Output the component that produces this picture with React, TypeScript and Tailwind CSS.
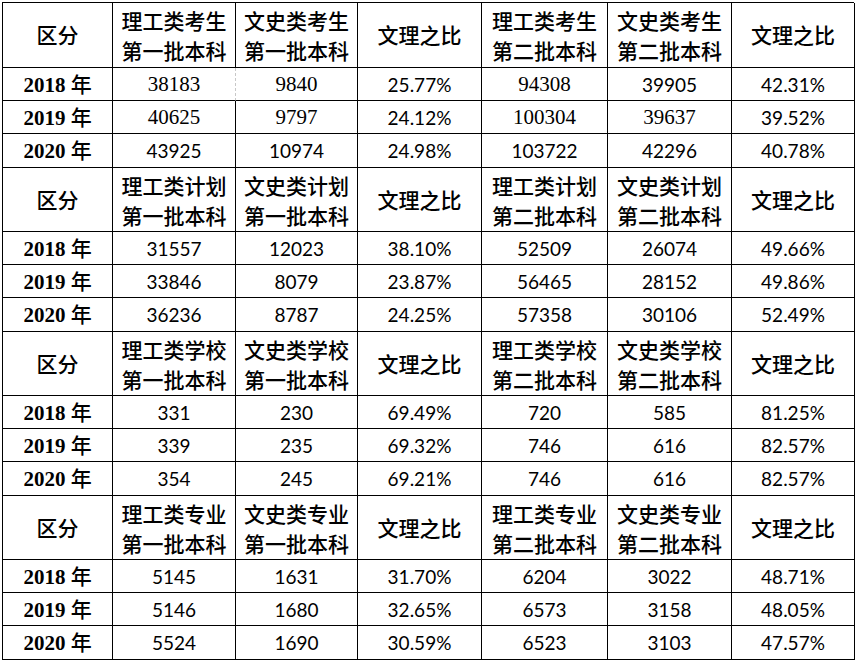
import React from "react";

type Cell = { v: string; serif?: boolean };

const sections: { h: string; rows: Cell[][] }[] = [
  {
    h: "考生",
    rows: [
      [{ v: "38183", serif: true }, { v: "9840", serif: true }, { v: "25.77%" }, { v: "94308", serif: true }, { v: "39905" }, { v: "42.31%" }],
      [{ v: "40625", serif: true }, { v: "9797", serif: true }, { v: "24.12%" }, { v: "100304", serif: true }, { v: "39637", serif: true }, { v: "39.52%" }],
      [{ v: "43925" }, { v: "10974" }, { v: "24.98%" }, { v: "103722" }, { v: "42296" }, { v: "40.78%" }],
    ],
  },
  {
    h: "计划",
    rows: [
      [{ v: "31557" }, { v: "12023" }, { v: "38.10%" }, { v: "52509" }, { v: "26074" }, { v: "49.66%" }],
      [{ v: "33846" }, { v: "8079" }, { v: "23.87%" }, { v: "56465" }, { v: "28152" }, { v: "49.86%" }],
      [{ v: "36236" }, { v: "8787" }, { v: "24.25%" }, { v: "57358" }, { v: "30106" }, { v: "52.49%" }],
    ],
  },
  {
    h: "学校",
    rows: [
      [{ v: "331" }, { v: "230" }, { v: "69.49%" }, { v: "720" }, { v: "585" }, { v: "81.25%" }],
      [{ v: "339" }, { v: "235" }, { v: "69.32%" }, { v: "746" }, { v: "616" }, { v: "82.57%" }],
      [{ v: "354" }, { v: "245" }, { v: "69.21%" }, { v: "746" }, { v: "616" }, { v: "82.57%" }],
    ],
  },
  {
    h: "专业",
    rows: [
      [{ v: "5145" }, { v: "1631" }, { v: "31.70%" }, { v: "6204" }, { v: "3022" }, { v: "48.71%" }],
      [{ v: "5146" }, { v: "1680" }, { v: "32.65%" }, { v: "6573" }, { v: "3158" }, { v: "48.05%" }],
      [{ v: "5524" }, { v: "1690" }, { v: "30.59%" }, { v: "6523" }, { v: "3103" }, { v: "47.57%" }],
    ],
  },
];

const years = ["2018", "2019", "2020"];
const rowH = ["h-[33px]", "h-[33px]", "h-[34px]"];

const cjk = "font-['Noto_Sans_CJK_SC',sans-serif]";
const sans = "font-['Lato','Noto_Sans_CJK_SC',sans-serif]";
const serif = "font-['Liberation_Serif','Noto_Sans_CJK_SC',serif]";

const cellBase = "flex flex-col items-center justify-center border-r border-b border-black text-black text-center";

export default function App() {
  return (
    <div className="w-[859px] h-[666px] bg-white pt-[2px] pl-[2px]">
      <div className="grid grid-cols-[110px_123px_122px_124px_126px_124px_123px] w-[852px] border-l border-t border-black">
        {sections.map((s, si) => (
          <React.Fragment key={si}>
            <div className={`${cellBase} ${si === 0 ? "h-[65px]" : "h-[64px]"} ${cjk} font-medium text-[21px]`}>区分</div>
            {[
              [`理工类${s.h}`, "第一批本科"],
              [`文史类${s.h}`, "第一批本科"],
              null,
              [`理工类${s.h}`, "第二批本科"],
              [`文史类${s.h}`, "第二批本科"],
              null,
            ].map((h, hi) =>
              h ? (
                <div key={hi} className={`${cellBase} ${cjk} font-medium text-[21px] leading-[30px]`}>
                  <div>{h[0]}</div>
                  <div>{h[1]}</div>
                </div>
              ) : (
                <div key={hi} className={`${cellBase} ${cjk} font-medium text-[21px]`}>文理之比</div>
              )
            )}
            {s.rows.map((r, ri) => (
              <React.Fragment key={ri}>
                <div className={`${cellBase} ${rowH[ri]} ${serif} font-bold text-[21px] leading-none`}>
                  <span>
                    {years[ri]} <span className={`${cjk} font-medium`}>年</span>
                  </span>
                </div>
                {r.map((c, ci) => {
                  const dashed = si === 0 && ri === 0 && ci === 0;
                  return (
                    <div
                      key={ci}
                      className={`${cellBase} ${dashed ? "border-r-[#c8c8c8] [border-right-style:dashed]" : ""} leading-none ${
                        c.serif ? `${serif} text-[21px]` : `${sans} text-[19px]`
                      }`}
                    >
                      {c.v}
                    </div>
                  );
                })}
              </React.Fragment>
            ))}
          </React.Fragment>
        ))}
      </div>
    </div>
  );
}
